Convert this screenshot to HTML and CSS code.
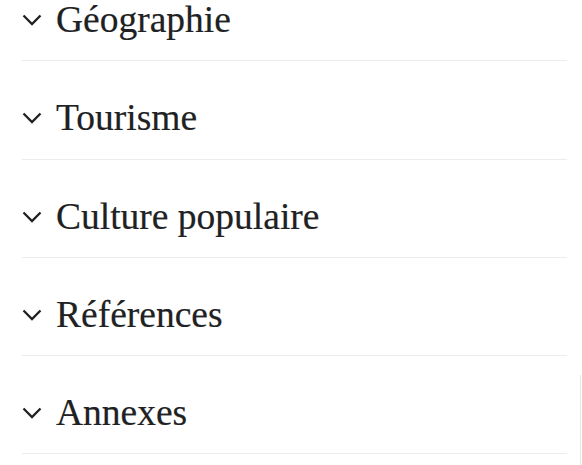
FILE: index.html
```html
<!DOCTYPE html>
<html lang="fr">
<head>
    <meta charset="UTF-8">
    <meta name="viewport" content="width=device-width, initial-scale=1.0">
    <title>Sections</title>
    <link rel="stylesheet" href="styles.css">
</head>
<body>
    <div class="sections">
        <div class="section-heading">
            <svg class="chevron" viewBox="0 0 20 20"><path d="M1.5 5.5 L10 14 L18.5 5.5"/></svg>
            <h2>Géographie</h2>
        </div>
        <div class="section-heading">
            <svg class="chevron" viewBox="0 0 20 20"><path d="M1.5 5.5 L10 14 L18.5 5.5"/></svg>
            <h2>Tourisme</h2>
        </div>
        <div class="section-heading">
            <svg class="chevron" viewBox="0 0 20 20"><path d="M1.5 5.5 L10 14 L18.5 5.5"/></svg>
            <h2>Culture populaire</h2>
        </div>
        <div class="section-heading">
            <svg class="chevron" viewBox="0 0 20 20"><path d="M1.5 5.5 L10 14 L18.5 5.5"/></svg>
            <h2>Références</h2>
        </div>
        <div class="section-heading">
            <svg class="chevron" viewBox="0 0 20 20"><path d="M1.5 5.5 L10 14 L18.5 5.5"/></svg>
            <h2>Annexes</h2>
        </div>
    </div>
    <div class="scroll-track"></div>
</body>
</html>
```

FILE: styles.css
```css
* {
    margin: 0;
    padding: 0;
    box-sizing: border-box;
}

body {
    font-family: 'Liberation Serif', 'Times New Roman', serif;
    background: #fff;
    color: #202122;
    overflow: hidden;
}

.sections {
    margin-top: -37px;
    padding: 0 15px 0 22px;
}

.section-heading {
    display: flex;
    align-items: center;
    padding: 35px 0 18.25px;
    border-bottom: 1px solid #eaecf0;
}

.chevron {
    width: 20px;
    height: 20px;
    margin-right: 14px;
    flex-shrink: 0;
    fill: none;
    stroke: #202122;
    stroke-width: 2.3;
}

h2 {
    font-size: 37.5px;
    font-weight: normal;
    line-height: 44px;
    -webkit-text-stroke: 0.2px #202122;
}

.scroll-track {
    position: absolute;
    top: 375px;
    right: 1px;
    width: 1px;
    height: 90px;
    background: #e6e6e6;
}
```
